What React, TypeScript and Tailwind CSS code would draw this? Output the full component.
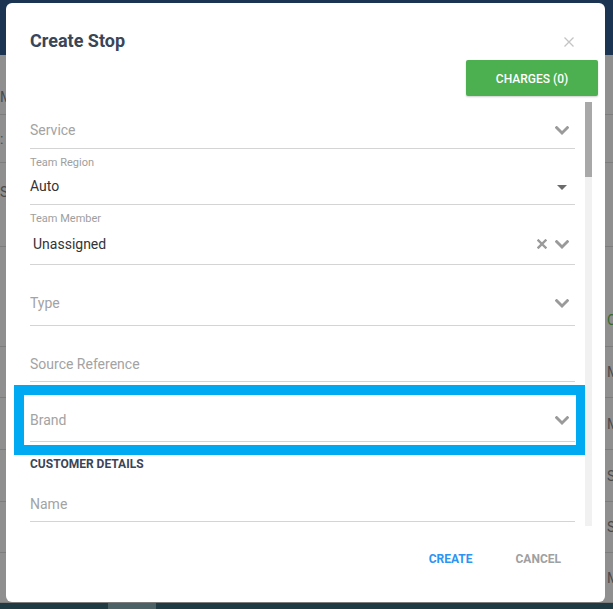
import React from "react";

const Chevron = () => (
	<svg width="14" height="9" viewBox="0 0 14 9" className="shrink-0">
		<path
			d="M1.6 1.6 L7 7 L12.4 1.6"
			fill="none"
			stroke="#9a9a9a"
			strokeWidth="2.8"
			strokeLinecap="square"
		/>
	</svg>
);

const ClearIcon = () => (
	<svg width="10" height="10" viewBox="0 0 10 10" className="shrink-0">
		<path
			d="M1.5 1.5 L8.5 8.5 M8.5 1.5 L1.5 8.5"
			stroke="#9a9a9a"
			strokeWidth="2.4"
			strokeLinecap="square"
		/>
	</svg>
);

const Caret = () => (
	<svg width="10" height="5" viewBox="0 0 10 5" className="shrink-0">
		<path d="M0 0 L10 0 L5 5 Z" fill="#6b6b6b" />
	</svg>
);

type BgRow = { cls: string; left?: string; right?: string; rightGreen?: boolean };

// rows of the page that sits behind the dialog
const bgRows: BgRow[] = [
	{ cls: "h-[60px] items-end pb-[7px]", left: "M" },
	{ cls: "h-[48px] items-center", left: ":" },
	{ cls: "h-[84px] items-start pt-[19px]", left: "Sh" },
	{ cls: "h-[100px] items-start pt-[63px]", right: "C", rightGreen: true },
	{ cls: "h-[51px] items-center", right: "M" },
	{ cls: "h-[52px] items-center", right: "M" },
	{ cls: "h-[52px] items-center", right: "S" },
	{ cls: "h-[51px] items-center", right: "S" },
	{ cls: "h-[50px] items-center", right: "M" },
];

const SimpleField = ({
	height,
	pt,
	text,
	icon = true,
}: {
	height: string;
	pt: string;
	text: string;
	icon?: boolean;
}) => (
	<div className={`${height} ${pt} border-b border-[#d4d4d4]`}>
		<div className="flex h-[20px] items-center justify-between pr-[6px]">
			<span className="text-[14px] text-[#a3a3a3]">{text}</span>
			{icon && <Chevron />}
		</div>
	</div>
);

export default function App() {
	return (
		<div
			className="relative flex h-[609px] w-[613px] flex-col overflow-hidden bg-[#8f8f8f]"
			style={{ fontFamily: "Roboto, 'Liberation Sans', sans-serif" }}>
			{/* page behind the dialog */}
			<div className="h-[55px] shrink-0 bg-[#1b3452]" />
			<div className="flex flex-1 flex-col">
				{bgRows.map((row, i) => (
					<div
						key={i}
						className={`${row.cls} flex border-b border-[#7d7d7d] text-[14px] leading-[20px] text-[#4a4a4a]`}>
						<div className="w-[6px] overflow-hidden whitespace-nowrap">{row.left}</div>
						<div className="flex-1" />
						<div
							className={`w-[6px] overflow-hidden whitespace-nowrap ${
								row.rightGreen ? "text-[#2f6b2f]" : ""
							}`}>
							{row.right}
						</div>
					</div>
				))}
			</div>
			<div className="flex h-[6px] shrink-0 bg-[#1f3a42]">
				<div className="ml-[108px] w-[48px] bg-[#4c6166]" />
			</div>

			{/* dialog */}
			<div className="absolute left-[6px] top-[3px] flex h-[599px] w-[599px] flex-col rounded-[6px] bg-white">
				<div className="mt-[25px] flex h-[24px] items-center justify-between pl-[24px] pr-[31px]">
					<h2 className="text-[18px] font-bold text-[#3a4557]">Create Stop</h2>
					<svg width="10" height="10" viewBox="0 0 10 10" className="mt-[3px]">
						<path d="M0.5 0.5 L9.5 9.5 M9.5 0.5 L0.5 9.5" stroke="#c4c4c4" strokeWidth="1.3" />
					</svg>
				</div>
				<div className="mt-[8px] flex justify-end pr-[7px]">
					<button
						type="button"
						className="flex h-[36px] w-[132px] items-center justify-center rounded-[2px] bg-[#4caf50] pt-[2px] text-[12px] font-medium text-white shadow-[0_1px_2px_rgba(0,0,0,0.2)]">
						CHARGES (0)
					</button>
				</div>

				<div className="mt-[4px] flex h-[426px] overflow-hidden">
					<div className="ml-[24px] flex w-[545px] flex-col">
						<SimpleField height="h-[49px]" pt="pt-[20px]" text="Service" />

						<div className="h-[56px] border-b border-[#d4d4d4] pt-[7px]">
							<div className="h-[14px] text-[11px] leading-[14px] text-[#9e9e9e]">Team Region</div>
							<div className="mt-[6px] flex h-[20px] items-center justify-between pr-[8px]">
								<span className="text-[14px] text-[#333]">Auto</span>
								<div className="mt-[3px]">
									<Caret />
								</div>
							</div>
						</div>

						<div className="h-[60px] border-b border-[#d4d4d4] pt-[7px]">
							<div className="h-[14px] text-[11px] leading-[14px] text-[#9e9e9e]">Team Member</div>
							<div className="mt-[8px] flex h-[20px] items-center justify-between pr-[6px]">
								<span className="pl-[3px] text-[14px] text-[#333]">Unassigned</span>
								<div className="flex items-center gap-[8px]">
									<ClearIcon />
									<Chevron />
								</div>
							</div>
						</div>

						<SimpleField height="h-[61px]" pt="pt-[28px]" text="Type" />
						<SimpleField height="h-[56px]" pt="pt-[28px]" text="Source Reference" icon={false} />

						<div className="-ml-[16px] -mr-[11px] mt-[3px] h-[70px] border-[10px] border-[#00aaf2] pl-[6px] pr-[1px]">
							<SimpleField height="h-[47px]" pt="pt-[15px]" text="Brand" />
						</div>

						<div className="mt-[1px] h-[16px] text-[12px] font-bold leading-[16px] text-[#3a4557]">
							CUSTOMER DETAILS
						</div>
						<SimpleField height="h-[50px]" pt="pt-[22px]" text="Name" icon={false} />
					</div>
					<div className="ml-[10px] mt-[2px] h-[424px] w-[7px] bg-[#f1f1f1]">
						<div className="h-[75px] bg-[#a8a8a8]" />
					</div>
				</div>

				<div className="mt-[25px] flex h-[16px] items-center justify-end gap-[43px] pr-[44px] text-[12px] font-bold">
					<button type="button" className="text-[#2d94f3]">
						CREATE
					</button>
					<button type="button" className="text-[#a0a0a0]">
						CANCEL
					</button>
				</div>
			</div>
		</div>
	);
}
